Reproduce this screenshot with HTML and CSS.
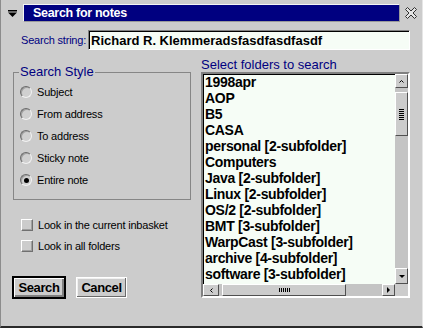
FILE: index.html
```html
<!DOCTYPE html>
<html lang="en">
<head>
    <meta charset="UTF-8">
    <title>Search for notes</title>
    <link rel="stylesheet" href="styles.css">
</head>
<body>
    <div class="window">
        <div class="titlebar">
            <span class="sysmenu">
                <svg width="9" height="7" viewBox="0 0 9 7"><rect x="0" y="0" width="9" height="1.5" fill="#000"/><polygon points="0,2.5 9,2.5 4.5,7" fill="#000"/></svg>
            </span>
            <div class="caption">Search for notes</div>
            <span class="close">
                <svg width="14" height="14" viewBox="0 0 14 14"><polygon points="1.5,3.5 3.5,1.5 7,5 10.5,1.5 12.5,3.5 9,7 12.5,10.5 10.5,12.5 7,9 3.5,12.5 1.5,10.5 5,7" fill="#e4e4e4" stroke="#303030" stroke-width="1"/></svg>
            </span>
        </div>

        <div class="search-row">
            <label class="label">Search string:</label>
            <input class="textfield" type="text" value="Richard R. Klemmeradsfasdfasdfasdf">
        </div>

        <div class="main">
            <div class="left">
                <fieldset class="group">
                    <legend>Search Style</legend>
                    <div class="option"><span class="radio"></span>Subject</div>
                    <div class="option"><span class="radio"></span>From address</div>
                    <div class="option"><span class="radio"></span>To address</div>
                    <div class="option"><span class="radio"></span>Sticky note</div>
                    <div class="option"><span class="radio checked"></span>Entire note</div>
                </fieldset>

                <div class="checks">
                    <div class="option check-row"><span class="check"></span>Look in the current inbasket</div>
                    <div class="option check-row"><span class="check"></span>Look in all folders</div>
                </div>

                <div class="buttons">
                    <button class="btn default">Search</button>
                    <button class="btn">Cancel</button>
                </div>
            </div>

            <div class="right">
                <div class="list-label">Select folders to search</div>
                <div class="listbox">
                    <ul class="items">
                        <li>1998apr</li>
                        <li>AOP</li>
                        <li>B5</li>
                        <li>CASA</li>
                        <li>personal [2-subfolder]</li>
                        <li>Computers</li>
                        <li>Java [2-subfolder]</li>
                        <li>Linux [2-subfolder]</li>
                        <li>OS/2 [2-subfolder]</li>
                        <li>BMT [3-subfolder]</li>
                        <li>WarpCast [3-subfolder]</li>
                        <li>archive [4-subfolder]</li>
                        <li>software [3-subfolder]</li>
                        <li>Internet [5-subfolder]</li>
                    </ul>

                    <!-- vertical scrollbar -->
                    <div class="vscroll">
                        <span class="sbtn up">
                            <svg width="5" height="3" viewBox="0 0 5 3"><polyline points="0.5,2.5 2.5,0.5 4.5,2.5" fill="none" stroke="#000" stroke-width="1"/></svg>
                        </span>
                        <div class="vtrack">
                            <span class="thumb vthumb"><span class="grip-h"></span></span>
                        </div>
                        <span class="sbtn down">
                            <svg width="6" height="3" viewBox="0 0 6 3"><polygon points="0,0 6,0 3,3" fill="#000"/></svg>
                        </span>
                    </div>

                    <!-- horizontal scrollbar -->
                    <div class="hscroll">
                        <span class="sbtn left-btn">
                            <svg width="3" height="5" viewBox="0 0 3 5"><polyline points="2.5,0.5 0.5,2.5 2.5,4.5" fill="none" stroke="#000" stroke-width="1"/></svg>
                        </span>
                        <div class="htrack">
                            <span class="thumb hthumb"><span class="grip-v"></span></span>
                        </div>
                        <span class="sbtn right-btn">
                            <svg width="3" height="6" viewBox="0 0 3 6"><polygon points="0,0 3,3 0,6" fill="#000"/></svg>
                        </span>
                    </div>
                    <div class="corner"></div>
                </div>
            </div>
        </div>
    </div>
</body>
</html>
```

FILE: styles.css
```css
body {
    margin: 0;
    background-color: #cccccc;
    font-family: "Liberation Sans", Arial, sans-serif;
}
.window {
    width: 423px;
    height: 328px;
    box-sizing: border-box;
    background-color: #cccccc;
    border-left: 1px solid #8c8c8c;
    border-right: 1px solid #e6e6e6;
    border-bottom: 2px solid #2a2a2a;
}

/* title bar */
.titlebar {
    display: flex;
    align-items: center;
    height: 18px;
    padding-top: 4px;
}
.sysmenu {
    width: 22px;
    display: flex;
    justify-content: center;
}
.caption {
    flex: 1;
    height: 18px;
    box-sizing: border-box;
    background-color: #000080;
    border: 1px solid;
    border-color: #f4f4f4 #9a9a9a #9a9a9a #f4f4f4;
    color: #fff;
    font-weight: bold;
    font-size: 12.5px;
    line-height: 16px;
    padding-left: 9px;
    letter-spacing: -0.3px;
}
.close {
    width: 22px;
    display: flex;
    justify-content: center;
}

/* search string */
.search-row {
    display: flex;
    align-items: center;
    justify-content: space-between;
    margin-top: 8px;
    padding: 0 12px 0 20px;
}
.label {
    color: #000080;
    font-size: 11px;
    letter-spacing: -0.2px;
}
.textfield {
    width: 322px;
    height: 20px;
    box-sizing: border-box;
    margin: 0;
    padding: 0 2px;
    border: 1px solid;
    border-color: #808080 #ffffff #ffffff #808080;
    box-shadow: inset 1px 1px #000;
    background-color: #f6fdf6;
    font-family: "Liberation Sans", Arial, sans-serif;
    font-weight: bold;
    font-size: 13px;
    color: #000;
    outline: none;
}

/* main area */
.main {
    display: grid;
    grid-template-columns: 178px 209px;
    column-gap: 10px;
    margin-top: 8px;
    padding: 0 12px;
}
.left {
    padding-top: 7px;
}
.group {
    margin: 0;
    padding: 2px 6px 8px 6px;
    border: 1px solid #868686;
    min-width: 0;
}
.group legend {
    padding: 0 1px;
    margin-left: -1px;
    color: #000080;
    font-size: 13px;
    line-height: 14px;
}
.option {
    display: flex;
    align-items: center;
    gap: 5px;
    height: 22px;
    font-size: 11px;
    letter-spacing: -0.2px;
    color: #000;
}
.radio {
    width: 12px;
    height: 12px;
    box-sizing: border-box;
    border-radius: 50%;
    border: 1px solid;
    border-color: #6a6a6a #f2f2f2 #f2f2f2 #6a6a6a;
    box-shadow: inset 1px 1px #a0a0a0;
    background-color: #d0d0d0;
    display: flex;
    align-items: center;
    justify-content: center;
}
.radio.checked::after {
    content: "";
    width: 5px;
    height: 5px;
    border-radius: 50%;
    background-color: #000;
}
.checks {
    margin-top: 14px;
    padding-left: 8px;
}
.check-row {
    height: 21px;
}
.check {
    width: 12px;
    height: 12px;
    box-sizing: border-box;
    border: 1px solid;
    border-color: #ffffff #707070 #707070 #ffffff;
    box-shadow: inset -1px -1px #a0a0a0;
    background-color: #cccccc;
}
.buttons {
    display: flex;
    align-items: center;
    gap: 10px;
    margin-top: 20px;
    margin-left: -1px;
}
.btn {
    width: 51px;
    height: 21px;
    box-sizing: border-box;
    padding: 0;
    background-color: #cccccc;
    border: 1px solid #ffffff;
    box-shadow: inset -1px -1px #6a6a6a, inset 1px 1px #f0f0f0;
    font-family: "Liberation Sans", Arial, sans-serif;
    font-weight: bold;
    font-size: 13px;
    letter-spacing: -0.4px;
    color: #000;
}
.btn.default {
    width: 54px;
    height: 23px;
    border: 2px solid #000;
    box-shadow: inset 1px 1px #ffffff, inset -2px -2px #808080;
}

/* folder list */
.list-label {
    height: 14px;
    line-height: 14px;
    font-size: 13px;
    color: #000080;
}
.listbox {
    height: 226px;
    box-sizing: border-box;
    border: 2px solid;
    border-color: #808080 #ffffff #ffffff #808080;
    box-shadow: inset 1px 1px #000;
    background-color: #f6fdf6;
    display: grid;
    grid-template-columns: 1fr 13px;
    grid-template-rows: 1fr 12px;
}
.items {
    list-style: none;
    margin: 0;
    padding: 0 0 0 2px;
    overflow: hidden;
    font-weight: bold;
    font-size: 14px;
    letter-spacing: -0.3px;
    line-height: 16px;
    color: #000;
    white-space: nowrap;
}
.vscroll {
    display: flex;
    flex-direction: column;
    background-color: #cccccc;
}
.sbtn {
    display: flex;
    align-items: center;
    justify-content: center;
    box-sizing: border-box;
    background-color: #cccccc;
    border: 1px solid;
    border-color: #ffffff #505050 #505050 #ffffff;
}
.up {
    height: 14px;
}
.down {
    height: 16px;
}
.vtrack {
    flex: 1;
    background-color: #c4c4c4;
}
.thumb {
    display: flex;
    align-items: center;
    justify-content: center;
    box-sizing: border-box;
    background-color: #cccccc;
    border: 1px solid;
    border-color: #ffffff #505050 #505050 #ffffff;
}
.vthumb {
    margin-top: 4px;
    height: 44px;
}
.grip-h {
    width: 5px;
    height: 11px;
    background: repeating-linear-gradient(#000 0 1px, transparent 1px 2px);
}
.hscroll {
    display: flex;
    background-color: #cccccc;
}
.left-btn {
    width: 16px;
}
.right-btn {
    width: 13px;
}
.htrack {
    flex: 1;
    background-color: #c4c4c4;
    display: flex;
}
.hthumb {
    margin-left: 3px;
    width: 124px;
}
.grip-v {
    width: 11px;
    height: 4px;
    background: repeating-linear-gradient(90deg, #000 0 1px, transparent 1px 2px);
}
.corner {
    background-color: #cccccc;
}
```
